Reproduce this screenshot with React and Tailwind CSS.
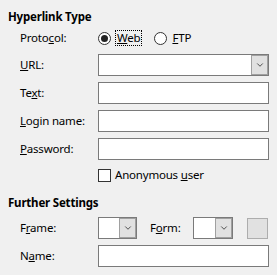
import { ChevronDown } from 'lucide-react';

function Field() {
  return <div className="h-[22px] border border-[#7a7a7a] bg-white" />;
}

function Combo({ className = '' }) {
  return (
    <div className={`flex h-[22px] border border-[#7a7a7a] bg-white ${className}`}>
      <div className="flex-1" />
      <div className="flex w-[17px] items-center justify-center border border-[#a0a0a0] bg-[#e1e1e1]">
        <ChevronDown className="h-[10px] w-[10px] text-[#333]" strokeWidth={2} />
      </div>
    </div>
  );
}

function Row({ label, children, className = '' }) {
  return (
    <div className={`grid grid-cols-[78px_1fr] items-center pl-3 ${className}`}>
      <span>{label}</span>
      {children}
    </div>
  );
}

export default function App() {
  return (
    <div
      className="h-[275px] w-[277px] bg-[#f0f0f0] px-2 pt-[9px] text-[11.5px] leading-[16px] tracking-[-0.2px] text-black"
      style={{ fontFamily: '"Noto Sans", "Open Sans", sans-serif' }}
    >
      {/* Hyperlink Type */}
      <div className="h-4 font-bold">Hyperlink Type</div>

      <Row label={<>Proto<u>c</u>ol:</>} className="mt-[3px] h-5">
        <div className="flex items-center">
          <span className="flex h-[13px] w-[13px] items-center justify-center rounded-full border border-[#333] bg-white">
            <span className="h-[7px] w-[7px] rounded-full bg-[#222]" />
          </span>
          <span className="ml-[4px] border border-dotted border-black px-px leading-[14px]">
            <u>W</u>eb
          </span>
          <span className="ml-[12px] h-[13px] w-[13px] rounded-full border border-[#333] bg-white" />
          <span className="ml-[5px]">
            <u>F</u>TP
          </span>
        </div>
      </Row>

      <Row label={<><u>U</u>RL:</>} className="mt-[6px]">
        <Combo />
      </Row>
      <Row label={<>Te<u>x</u>t:</>} className="mt-[6px]">
        <Field />
      </Row>
      <Row label={<><u>L</u>ogin name:</>} className="mt-[6px]">
        <Field />
      </Row>
      <Row label={<><u>P</u>assword:</>} className="mt-[6px]">
        <Field />
      </Row>

      <div className="mt-[7px] flex items-center pl-[90px]">
        <span className="h-[13px] w-[13px] border border-[#333] bg-white" />
        <span className="ml-[4px]">
          Anonymous <u>u</u>ser
        </span>
      </div>

      {/* Further Settings */}
      <div className="mt-[12px] h-4 font-bold">Further Settings</div>

      <Row label={<>F<u>r</u>ame:</>} className="mt-[6px]">
        <div className="flex items-center">
          <Combo className="w-[39px]" />
          <span className="ml-[13px] w-[43px]">
            F<u>o</u>rm:
          </span>
          <Combo className="w-[40px]" />
          <div className="ml-[14px] h-[21px] w-[21px] border border-[#adadad] bg-[#e1e1e1]" />
        </div>
      </Row>
      <Row label={<>N<u>a</u>me:</>} className="mt-[6px]">
        <Field />
      </Row>
    </div>
  );
}
